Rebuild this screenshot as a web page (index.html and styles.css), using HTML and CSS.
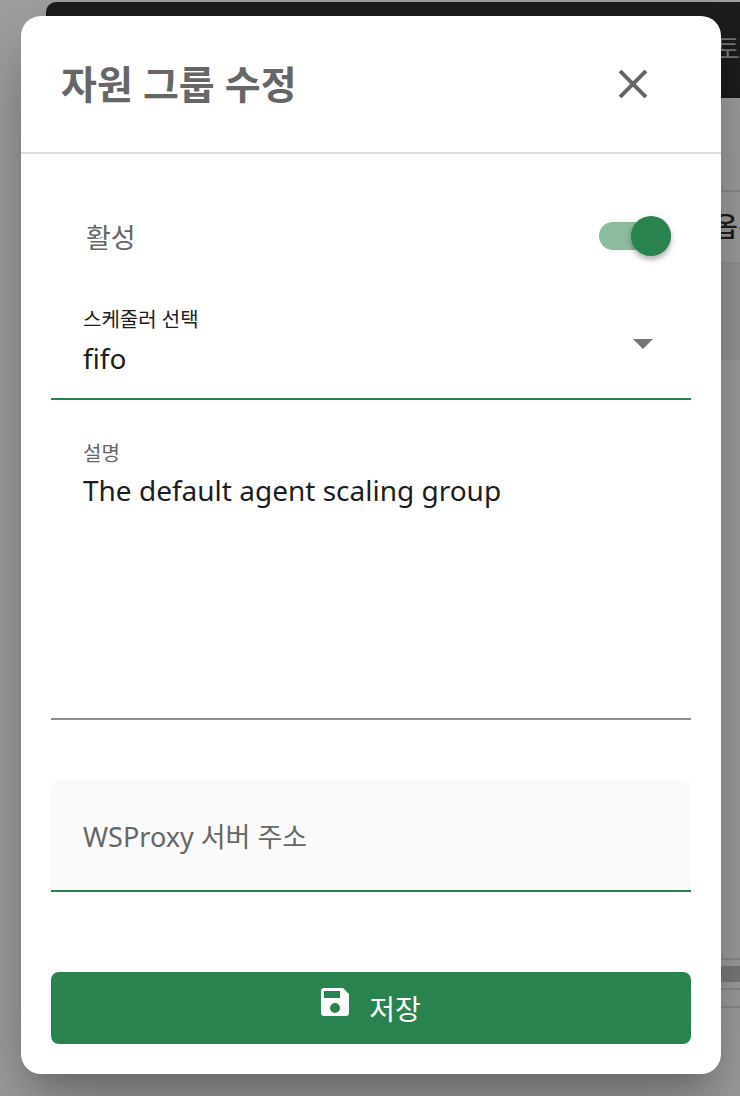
FILE: index.html
```
<!DOCTYPE html>
<html lang="ko">
<head>
  <meta charset="UTF-8">
  <meta name="viewport" content="width=device-width, initial-scale=1">
  <title>자원 그룹 수정</title>
  <link rel="stylesheet" href="styles.css">
</head>
<body>

  <!-- Page behind the dialog -->
  <div class="page" aria-hidden="true">
    <div class="topbar">토</div>
    <div class="tabs"></div>
    <div class="grid-header"><span>옵션</span></div>
    <div class="grid-row"></div>
    <div class="grid-body"></div>
    <div class="scrollbar"></div>
    <div class="grid-footer"></div>
  </div>

  <div class="overlay">
    <div class="dialog" role="dialog" aria-labelledby="dialogTitle">
      <div class="dialog-header">
        <h2 id="dialogTitle">자원 그룹 수정</h2>
        <button type="button" class="close-btn" aria-label="닫기">
          <svg viewBox="0 0 28 28" width="28" height="28">
            <path d="M1 1L27 27M27 1L1 27" stroke="currentColor" stroke-width="4" />
          </svg>
        </button>
      </div>

      <form class="dialog-body">
        <div class="switch-row">
          <label for="active">활성</label>
          <input type="checkbox" role="switch" id="active" class="switch" checked>
        </div>

        <div class="field select-field">
          <label for="scheduler">스케줄러 선택</label>
          <select id="scheduler">
            <option>fifo</option>
            <option>lifo</option>
            <option>drf</option>
          </select>
          <svg class="arrow" viewBox="0 0 20 10" width="20" height="10">
            <path d="M0 0H20L10 10Z" fill="#757575" />
          </svg>
        </div>

        <div class="field text-field">
          <label for="description">설명</label>
          <textarea id="description">The default agent scaling group</textarea>
        </div>

        <input type="text" id="proxy" class="proxy-input" placeholder="WSProxy 서버 주소" aria-label="WSProxy 서버 주소">

        <button type="submit" class="save-btn">
          <svg viewBox="0 0 28 28" width="28" height="28">
            <path fill="currentColor" fill-rule="evenodd" d="M3 0H22L28 6V25Q28 28 25 28H3Q0 28 0 25V3Q0 0 3 0ZM3 3V10H19V3ZM14 15A5 5 0 1 0 14 25A5 5 0 1 0 14 15Z" />
          </svg>
          <span>저장</span>
        </button>
      </form>
    </div>
  </div>

</body>
</html>
```
FILE: styles.css
```
* {
  box-sizing: border-box;
  margin: 0;
  padding: 0;
}

body {
  position: relative;
  min-height: 100vh;
  overflow-x: hidden;
  background-color: #a2a2a2;
  color: #1d1d1d;
  font-family: "Noto Sans", "Noto Sans CJK KR", sans-serif;
  font-size: 27px;
}

input,
select,
textarea,
button {
  border: none;
  border-radius: 0;
  outline: none;
  background: none;
  color: inherit;
  font-family: inherit;
}

/* Page behind the dialog */
.page {
  padding: 2px 0 0 46px;
}

.topbar {
  height: 96px;
  border-top-left-radius: 10px;
  background-color: #1c1d1e;
  color: #777;
  line-height: 94px;
  text-align: right;
}

.tabs {
  height: 94px;
  border-bottom: 2px solid #8e8e8e;
}

.grid-header {
  display: flex;
  justify-content: flex-end;
  height: 72px;
  border-bottom: 2px solid #959595;
  font-weight: 500;
  line-height: 70px;
}

.grid-header span {
  width: 27px;
  white-space: nowrap;
}

.grid-row {
  height: 96px;
  background-color: #999;
}

.grid-body {
  height: 600px;
  border-bottom: 2px solid #8e8e8e;
}

.scrollbar {
  height: 16px;
  margin: 6px 0;
  background-color: #7e7e7e;
}

.grid-footer {
  height: 20px;
  border-top: 2px solid #8e8e8e;
  border-bottom: 2px solid #8e8e8e;
}

/* Dialog */
.overlay {
  position: absolute;
  inset: 0;
  padding: 16px 19px 22px 21px;
}

.dialog {
  border-radius: 20px;
  background-color: #fff;
  box-shadow: 0 22px 30px -14px rgba(0, 0, 0, 0.2),
    0 48px 76px 6px rgba(0, 0, 0, 0.14),
    0 18px 92px 16px rgba(0, 0, 0, 0.12);
}

.dialog-header {
  display: flex;
  justify-content: space-between;
  align-items: center;
  height: 138px;
  padding: 0 64px 0 40px;
  border-bottom: 2px solid #ddd;
}

.dialog-header h2 {
  color: #666;
  font-size: 39px;
  line-height: 48px;
}

.close-btn {
  display: flex;
  padding: 10px;
  color: #666;
  cursor: pointer;
}

.dialog-body {
  display: flex;
  flex-direction: column;
  padding: 50px 30px 30px;
}

.switch-row {
  display: flex;
  justify-content: space-between;
  align-items: center;
  height: 64px;
  padding: 0 20px 0 35px;
  color: #666;
}

.switch {
  appearance: none;
  display: flex;
  align-items: center;
  width: 72px;
  height: 28px;
  border-radius: 14px;
  background-color: #8dbc9f;
  cursor: pointer;
}

.switch::before {
  content: "";
  width: 40px;
  height: 40px;
  border-radius: 50%;
  background-color: #fff;
  box-shadow: 0 4px 4px rgba(0, 0, 0, 0.2), 0 2px 10px rgba(0, 0, 0, 0.14);
}

.switch:checked::before {
  margin-left: auto;
  background-color: #28834f;
}

.field {
  display: flex;
  flex-direction: column;
  padding: 0 32px;
}

.field label {
  color: #666;
  font-size: 20px;
  line-height: 28px;
}

.select-field {
  position: relative;
  height: 132px;
  padding-top: 38px;
  border-bottom: 2px solid #28834f;
}

.select-field label {
  color: #1d1d1d;
}

.field select {
  appearance: none;
  height: 48px;
  font-size: 28px;
  cursor: pointer;
}

.arrow {
  position: absolute;
  top: 71px;
  right: 38px;
  pointer-events: none;
}

.text-field {
  padding-top: 40px;
  border-bottom: 2px solid #8d8d8d;
}

.field textarea {
  height: 250px;
  padding-top: 3px;
  font-size: 28px;
  line-height: 38px;
  resize: none;
}

.proxy-input {
  height: 112px;
  margin-top: 60px;
  padding: 2px 32px 0;
  border-bottom: 2px solid #28834f;
  border-radius: 8px 8px 0 0;
  background-color: #fafafa;
  font-size: 27px;
}

.proxy-input::placeholder {
  color: #666;
}

.save-btn {
  display: flex;
  justify-content: center;
  align-items: center;
  gap: 20px;
  height: 72px;
  margin-top: 80px;
  border-radius: 8px;
  background-color: #28834f;
  color: #fff;
  font-size: 28px;
  cursor: pointer;
}

.save-btn svg {
  margin-bottom: 12px;
}
```
